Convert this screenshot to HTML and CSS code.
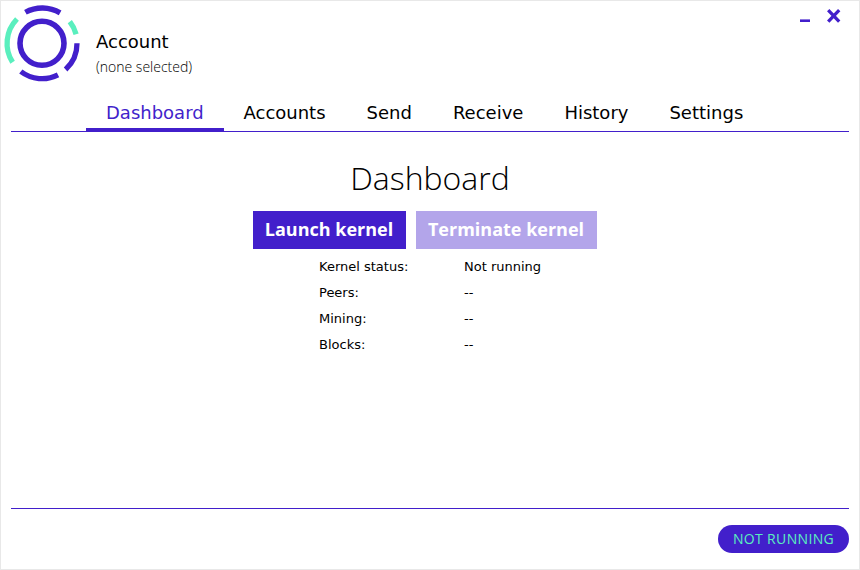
FILE: index.html
```html
<!DOCTYPE html>
<html lang="en">
<head>
<meta charset="utf-8">
<title>Dashboard</title>
<link rel="stylesheet" href="styles.css">
</head>
<body>
<div class="window">
  <header class="header">
    <svg class="logo" width="84" height="84" viewBox="0 0 84 84" fill="none" stroke="#421fcb" stroke-width="5.3">
      <circle cx="42" cy="43.3" r="22" stroke-width="5.6"/>
      <path d="M25.4 12.3A34.9 34.9 0 0 1 60.1 12.9"/>
      <path d="M69.8 21.6A35 35 0 0 1 76.1 34.2" stroke="#5aefbe"/>
      <path d="M77 43.3A35 35 0 0 1 65.6 69.5"/>
      <path d="M58 74.8A35 35 0 0 1 20.8 71.5"/>
      <path d="M12.6 62.3A35 35 0 0 1 17 19" stroke="#5aefbe"/>
    </svg>
    <div class="account">
      <div class="account-title"><span>Account</span></div>
      <div class="account-name"><span>(none selected)</span></div>
    </div>
    <div class="controls">
      <svg width="50" height="24" viewBox="0 0 50 24" fill="none" stroke="#421fcb">
        <path d="M5 20.7h10" stroke-width="2.6"/>
        <path d="M33.2 10.2l11 11.4M44.2 10.2l-11 11.4" stroke-width="3.3"/>
      </svg>
    </div>
  </header>
  <nav class="tabs">
    <a class="tab active">Dashboard</a>
    <a class="tab">Accounts</a>
    <a class="tab">Send</a>
    <a class="tab">Receive</a>
    <a class="tab">History</a>
    <a class="tab">Settings</a>
  </nav>
  <main class="content">
    <h1 class="title">Dashboard</h1>
    <div class="buttons">
      <button class="button launch">Launch kernel</button>
      <button class="button terminate" disabled>Terminate kernel</button>
    </div>
    <dl class="stats">
      <dt>Kernel status:</dt><dd>Not running</dd>
      <dt>Peers:</dt><dd>--</dd>
      <dt>Mining:</dt><dd>--</dd>
      <dt>Blocks:</dt><dd>--</dd>
    </dl>
  </main>
  <footer class="footer">
    <div class="status">NOT RUNNING</div>
  </footer>
</div>
</body>
</html>
```
FILE: styles.css
```css
* { box-sizing: border-box; }
body { margin: 0; background: #fff; color: #000; font-family: "DejaVu Sans", sans-serif; }
.window { width: 860px; height: 570px; border: 1px solid #e8e8e8; padding: 0 10px; display: flex; flex-direction: column; }
.header { height: 92px; display: flex; align-items: flex-start; }
.logo { margin: -1px 0 0 -11px; flex: none; }
.account { margin: 29px 0 0 12px; flex: 1; }
.account-title { font-size: 18px; line-height: 24px; height: 25px; }
.account-name { font: 300 14px/24px "Open Sans", sans-serif; }
.controls { margin: -1px 4px 0 0; height: 24px; }
.tabs { height: 39px; padding-left: 75px; border-bottom: 1px solid #421fcb; display: flex; }
.tab { height: 38px; padding: 0 20.5px; font-size: 18px; line-height: 40px; white-space: nowrap; }
.active { width: 137.5px; margin-right: -0.5px; padding: 0 20px; color: #421fcb; border-bottom: 3px solid #421fcb; }
.content { flex: 1; display: flex; flex-direction: column; align-items: center; }
.title { margin: 24px 0 0; font: 300 32px/44px "Open Sans", sans-serif; }
.buttons { display: flex; gap: 10px; margin: 11px 10px 0 0; }
.button { height: 38px; padding: 0 1px 2px 0; border: 0; color: #fff; font: 700 18px/36px "Open Sans", sans-serif; }
.launch { width: 153px; background: #421fcb; }
.terminate { width: 181px; background: #b3a5ea; }
.stats { display: grid; grid-template-columns: 145px 77px; grid-auto-rows: 26px; margin: 5px 0 0; font-size: 13px; line-height: 26px; white-space: nowrap; }
.stats dd { margin: 0; }
.footer { height: 61px; border-top: 1px solid #421fcb; padding-top: 16px; display: flex; justify-content: flex-end; }
.status { width: 131px; height: 28px; border-radius: 14px; background: #421fcb; color: #5aefbe; font: 400 14px/28px "Open Sans", sans-serif; letter-spacing: 0.35px; text-align: center; }
```
